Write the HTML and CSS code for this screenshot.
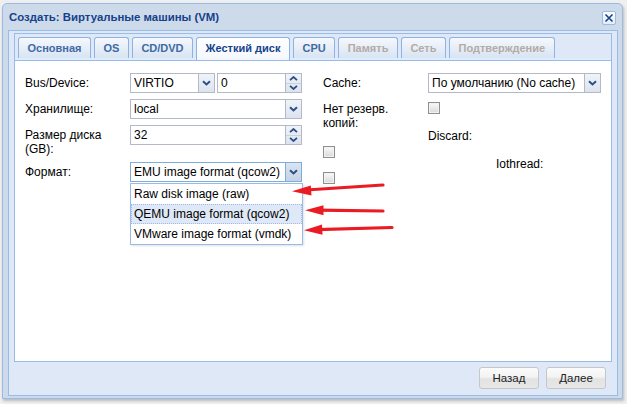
FILE: index.html
```html
<!DOCTYPE html>
<html lang="ru">
<head>
<meta charset="utf-8">
<title>Создать: Виртуальные машины (VM)</title>
<link rel="stylesheet" href="styles.css">
</head>
<body>
<div class="page">
  <div class="window">
    <div class="win-header">
      <span class="win-title">Создать: Виртуальные машины (VM)</span>
      <span class="win-close"><svg width="10" height="10" viewBox="0 0 10 10"><path d="M1.5 1.5L8.5 8.5M8.5 1.5L1.5 8.5" stroke="#15428b" stroke-width="1.6" fill="none"/></svg></span>
    </div>
    <div class="win-body">
      <div class="tabpanel">
        <div class="tabstrip">
          <span class="tab">Основная</span>
          <span class="tab">OS</span>
          <span class="tab">CD/DVD</span>
          <span class="tab active">Жесткий диск</span>
          <span class="tab">CPU</span>
          <span class="tab disabled">Память</span>
          <span class="tab disabled">Сеть</span>
          <span class="tab disabled">Подтверждение</span>
        </div>
        <div class="tabbody">
          <div class="col col-left">
            <div class="row">
              <span class="lbl">Bus/Device:</span>
              <div class="pair">
                <div class="field half"><span class="val">VIRTIO</span><span class="trigger"><svg width="9" height="6" viewBox="0 0 9 6"><path d="M1 1.2L4.5 4.5L8 1.2" stroke="#2c4f86" stroke-width="2" fill="none"/></svg></span></div>
                <div class="field half"><span class="val">0</span><span class="spinner"><span class="spin-half"><svg width="9" height="5" viewBox="0 0 9 5"><path d="M1 4.2L4.5 1L8 4.2" stroke="#2c4f86" stroke-width="1.8" fill="none"/></svg></span><span class="spin-half"><svg width="9" height="5" viewBox="0 0 9 5"><path d="M1 0.8L4.5 4L8 0.8" stroke="#2c4f86" stroke-width="1.8" fill="none"/></svg></span></span></div>
              </div>
            </div>
            <div class="row">
              <span class="lbl">Хранилище:</span>
              <div class="field wide"><span class="val">local</span><span class="trigger"><svg width="9" height="6" viewBox="0 0 9 6"><path d="M1 1.2L4.5 4.5L8 1.2" stroke="#2c4f86" stroke-width="2" fill="none"/></svg></span></div>
            </div>
            <div class="row">
              <span class="lbl">Размер диска<br>(GB):</span>
              <div class="field wide"><span class="val">32</span><span class="spinner"><span class="spin-half"><svg width="9" height="5" viewBox="0 0 9 5"><path d="M1 4.2L4.5 1L8 4.2" stroke="#2c4f86" stroke-width="1.8" fill="none"/></svg></span><span class="spin-half"><svg width="9" height="5" viewBox="0 0 9 5"><path d="M1 0.8L4.5 4L8 0.8" stroke="#2c4f86" stroke-width="1.8" fill="none"/></svg></span></span></div>
            </div>
            <div class="row">
              <span class="lbl">Формат:</span>
              <div class="field wide focus"><span class="val">EMU image format (qcow2)</span><span class="trigger hover"><svg width="9" height="6" viewBox="0 0 9 6"><path d="M1 1.2L4.5 4.5L8 1.2" stroke="#2c4f86" stroke-width="2" fill="none"/></svg></span></div>
            </div>
          </div>
          <div class="col col-right">
            <div class="row">
              <span class="lbl">Cache:</span>
              <div class="field wide"><span class="val">По умолчанию (No cache)</span><span class="trigger"><svg width="9" height="6" viewBox="0 0 9 6"><path d="M1 1.2L4.5 4.5L8 1.2" stroke="#2c4f86" stroke-width="2" fill="none"/></svg></span></div>
            </div>
            <div class="row tight">
              <span class="lbl">Нет резерв.<br>копий:</span>
              <div class="cell">
                <span class="cb first"></span>
                <span class="sub-lbl">Discard:</span>
              </div>
            </div>
            <span class="cb second"></span>
            <span class="iothread">Iothread:</span>
            <span class="cb third"></span>
          </div>
          <div class="picker">
            <div class="item">Raw disk image (raw)</div>
            <div class="item sel">QEMU image format (qcow2)</div>
            <div class="item">VMware image format (vmdk)</div>
          </div>
        </div>
      </div>
      <div class="win-footer">
        <span class="btn">Назад</span>
        <span class="btn">Далее</span>
      </div>
    </div>
  </div>
  <svg class="arrows" width="627" height="404" viewBox="0 0 627 404">
    <g stroke="#ea1b22" stroke-width="3.2" stroke-linecap="round">
      <line x1="383" y1="185" x2="306" y2="190"/>
      <line x1="383" y1="211" x2="318" y2="210.2"/>
      <line x1="392" y1="227.5" x2="317" y2="229.6"/>
    </g>
    <g fill="#ea1b22">
      <polygon points="292,191.2 311.5,195.5 310.8,185.5"/>
      <polygon points="305,210.3 323.5,205.3 323.5,215.3"/>
      <polygon points="304,230.2 322.5,234.8 322,224.6"/>
    </g>
  </svg>
</div>
</body>
</html>
```

FILE: styles.css
```css
* { box-sizing: border-box; }
html, body { margin: 0; padding: 0; }
body {
  width: 627px;
  height: 404px;
  overflow: hidden;
  background: #efefef;
  font-family: "Liberation Sans", Arial, sans-serif;
  font-size: 12px;
  color: #000;
}
.page {
  position: relative;
  width: 627px;
  height: 404px;
  padding: 3px 0 0 2px;
}
.window {
  width: 621px;
  height: 396px;
  border: 1px solid #99bbe8;
  border-radius: 5px 5px 0 0;
  background: #cddaea;
  padding: 0 4px 2px 5px;
  box-shadow: 1px 2px 3px rgba(0, 0, 0, 0.22);
}
.win-header {
  height: 26px;
  display: flex;
  align-items: center;
  justify-content: space-between;
  padding: 0 2px 0 1px;
}
.win-title {
  font-weight: bold;
  font-size: 11.4px;
  color: #15428b;
}
.win-close {
  width: 14px;
  height: 14px;
  border: 1px solid #99bbe8;
  border-radius: 2px;
  background: linear-gradient(#fbfdff, #e3ecf8);
  display: flex;
  align-items: center;
  justify-content: center;
  margin-top: 1px;
}
.win-body {
  height: 366px;
  border: 1px solid #99bbe8;
  background: #dfe8f6;
  padding: 2px 5px 0;
}
.tabpanel {
  height: 329px;
  border: 1px solid #99bbe8;
  display: flex;
  flex-direction: column;
}
.tabstrip {
  height: 27px;
  padding: 3px 0 2px 3px;
  display: flex;
  gap: 3px;
  background: #dfe8f6;
  border-bottom: 1px solid #99bbe8;
  box-shadow: inset 0 -2px 0 #deecfd;
}
.tab {
  height: 21px;
  padding: 0 8.5px;
  border: 1px solid #8db2e3;
  border-bottom: 0;
  border-radius: 3px 3px 0 0;
  background: linear-gradient(#f5f8fd, #d8e4f3);
  font-weight: bold;
  font-size: 11px;
  line-height: 20px;
  color: #416aa3;
  white-space: nowrap;
}
.tab.active {
  background: linear-gradient(#ffffff, #f3f7fd);
  color: #15428b;
  height: 23px;
  margin-bottom: -2px;
}
.tab.disabled { color: #b4aaa6; }
.tabbody {
  flex: 1;
  background: #fff;
  padding: 12px 10px 0 10px;
  display: flex;
  gap: 21px;
  position: relative;
}
.col {
  display: flex;
  flex-direction: column;
  align-items: flex-start;
}
.col-left { width: 277px; }
.col-right { width: 278px; }
.row {
  display: flex;
  margin-bottom: 6px;
}
.row.tight { margin-bottom: 0; }
.lbl {
  width: 105px;
  flex: none;
  padding-top: 3px;
  line-height: 14px;
}
.pair { display: flex; gap: 2px; }
.field {
  height: 20px;
  border: 1px solid #b5b8c8;
  background: #fff;
  display: flex;
}
.field.half { width: 85px; }
.field.wide { width: 172px; }
.col-right .field.wide { width: 173px; }
.field.focus { border-color: #7eadd9; }
.val {
  flex: 1;
  padding-left: 3px;
  line-height: 18px;
  white-space: nowrap;
  overflow: hidden;
}
.trigger {
  width: 16px;
  flex: none;
  border-left: 1px solid #b5b8c8;
  background: linear-gradient(#f0f4f9, #dbe3ee);
  display: flex;
  align-items: center;
  justify-content: center;
}
.trigger.hover {
  background: linear-gradient(#dbe5f1, #c3d2e5);
  border-left-color: #7eadd9;
}
.spinner {
  width: 16px;
  flex: none;
  border-left: 1px solid #b5b8c8;
  background: linear-gradient(#f0f4f9, #dbe3ee);
  display: flex;
  flex-direction: column;
}
.spin-half {
  flex: 1;
  display: flex;
  align-items: center;
  justify-content: center;
}
.spin-half + .spin-half { border-top: 1px solid #c9d2de; }
.cell {
  display: flex;
  flex-direction: column;
  align-items: flex-start;
}
.cb {
  display: block;
  width: 12px;
  height: 12px;
  border: 1px solid #8f8f8f;
  background: linear-gradient(#fafafa, #d9d9d9);
  box-shadow: inset 0 0 0 1px #f2f2f2;
}
.cb.first { margin-top: 3px; }
.sub-lbl {
  margin-top: 15px;
  line-height: 14px;
}
.cb.second { margin-top: 3px; }
.iothread {
  display: block;
  padding-left: 173px;
  line-height: 12px;
}
.cb.third { margin-top: 2px; }
.picker {
  position: absolute;
  left: 115px;
  top: 122px;
  width: 173px;
  border: 1px solid #99bbe8;
  background: #fff;
  box-shadow: 1px 1px 2px rgba(0, 0, 0, 0.12);
}
.item {
  height: 20px;
  line-height: 18px;
  padding-left: 2px;
  border: 1px solid transparent;
  white-space: nowrap;
}
.item.sel {
  background: #dfe8f6;
  border: 1px dotted #a3bae9;
}
.win-footer {
  height: 33px;
  display: flex;
  justify-content: flex-end;
  gap: 7px;
  padding: 5px 6px 0 0;
}
.btn {
  width: 60px;
  height: 22px;
  border: 1px solid #c6c6c6;
  border-radius: 3px;
  background: linear-gradient(#fbfbfb 0%, #f3f3f3 45%, #e3e3e3 55%, #e7e7e7 100%);
  font-size: 11.5px;
  color: #222;
  display: flex;
  align-items: center;
  justify-content: center;
}
.arrows {
  position: absolute;
  left: 0;
  top: 0;
  pointer-events: none;
}
```
